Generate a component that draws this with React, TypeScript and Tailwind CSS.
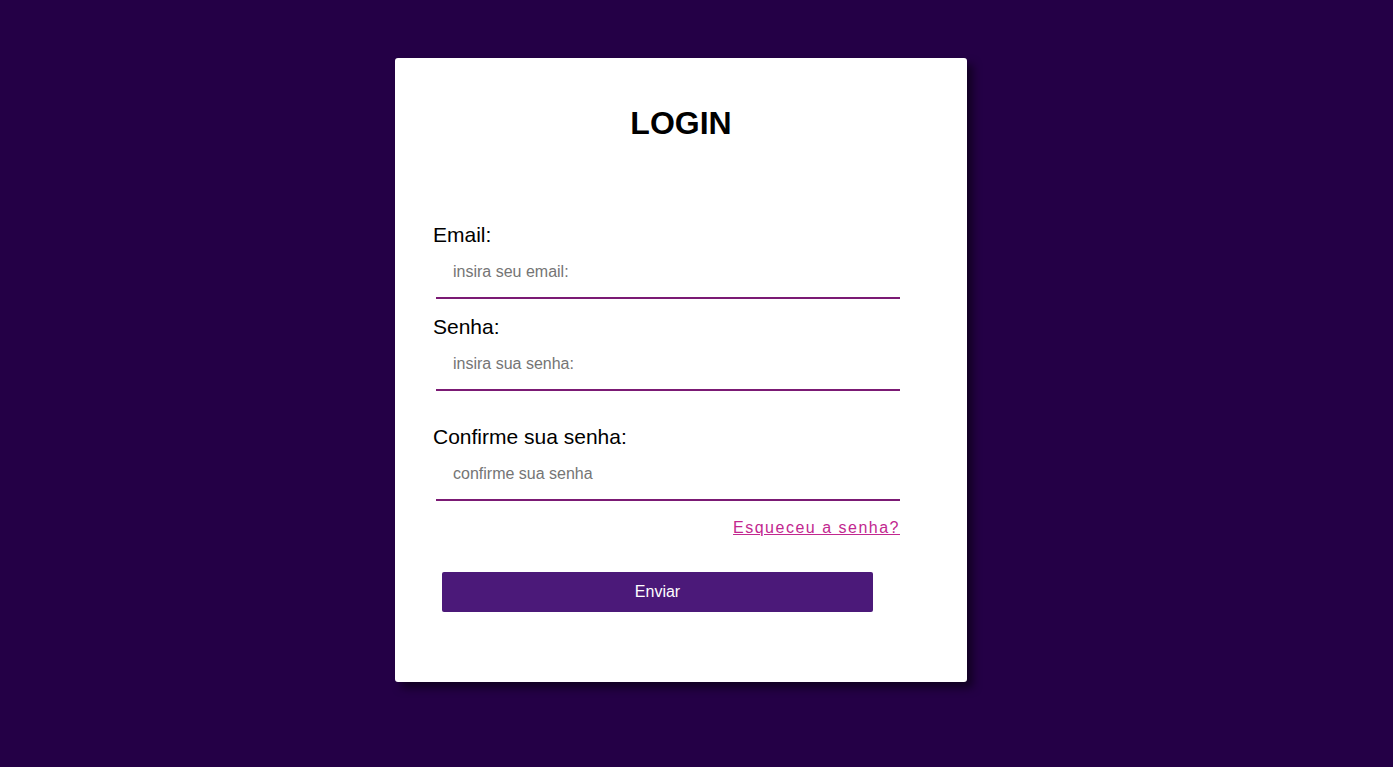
const fields = [
  { label: "Email:", placeholder: "insira seu email:", type: "email", gap: "mt-[82px]" },
  { label: "Senha:", placeholder: "insira sua senha:", type: "password", gap: "mt-4" },
  { label: "Confirme sua senha:", placeholder: "confirme sua senha", type: "password", gap: "mt-[34px]" },
];

export default function App() {
  return (
    <div
      className="flex min-h-screen w-full justify-center bg-[#240046] pt-[58px] pr-[31px]"
      style={{ fontFamily: '"Liberation Sans", Arial, sans-serif' }}
    >
      <div className="flex h-fit w-[572px] flex-col rounded-[3px] bg-white px-[38px] pt-[47px] pb-[70px] shadow-[6px_6px_8px_rgba(0,0,0,0.5)]">
        <h1 className="text-center text-[32px] leading-[36px] font-bold text-black">LOGIN</h1>

        <form className="flex flex-col" onSubmit={(e) => e.preventDefault()}>
          {fields.map((f) => (
            <div key={f.label} className={`flex flex-col ${f.gap}`}>
              <label className="text-[21px] leading-[24px] text-black">{f.label}</label>
              <input
                type={f.type}
                placeholder={f.placeholder}
                className="ml-[3px] box-border h-[52px] w-[464px] border-0 border-b-2 border-[#7b1a74] bg-transparent pl-[17px] text-[16px] text-black outline-none placeholder:text-[#757575]"
              />
            </div>
          ))}

          <div className="ml-[3px] mt-[18px] flex w-[464px] justify-end">
            <a href="#" className="text-[16px] leading-[18px] tracking-[1.5px] text-[#c2278f] underline">
              Esqueceu a senha?
            </a>
          </div>

          <button
            type="submit"
            className="mt-[35px] ml-[9px] h-10 w-[431px] rounded-[2px] bg-[#4b1979] text-[16px] text-white"
          >
            Enviar
          </button>
        </form>
      </div>
    </div>
  );
}
